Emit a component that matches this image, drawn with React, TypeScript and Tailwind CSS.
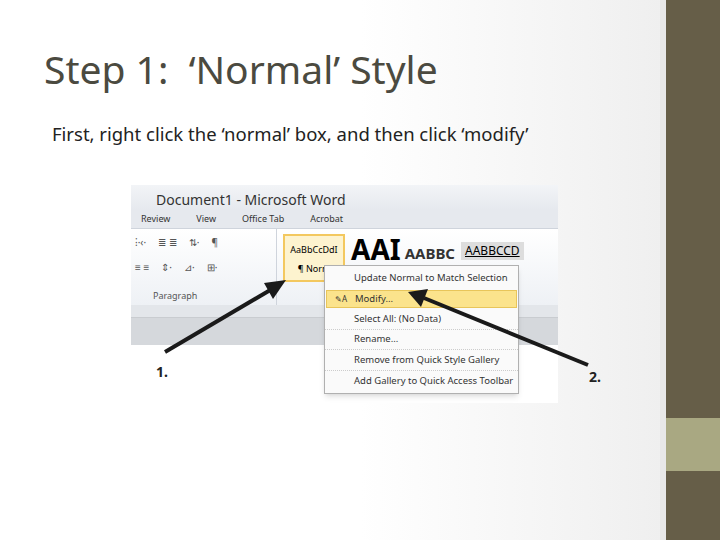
export default function App() {
  return (
    <div className="relative flex h-[540px] w-[720px] overflow-hidden bg-gradient-to-r from-white via-white to-[#ececec] font-['Lato',sans-serif]">
      <div className="flex-1">
        <h1 className="ml-[44px] mt-[44px] text-[39px] leading-[50px] text-[#4b4a40]">Step 1:&nbsp; ‘Normal’ Style</h1>
        <p className="ml-[52px] mt-[26px] text-[18.5px] text-[#222]">First, right click the ‘normal’ box, and then click ‘modify’</p>
        <div className="ml-[131px] mt-[37px] h-[218px] w-[427px] overflow-hidden bg-white font-['Liberation_Sans',sans-serif]">
          <div className="flex h-[25px] items-end bg-gradient-to-b from-[#f2f4f7] to-[#e6e9ee] pl-[25px] text-[14px] text-[#333]">Document1 - Microsoft Word</div>
          <div className="flex h-[18px] items-center gap-[26px] bg-[#e6e9ee] pl-[10px] text-[9px] text-[#333]">
            <span>Review</span><span>View</span><span>Office Tab</span><span>Acrobat</span>
          </div>
          <div className="flex h-[77px] border-t border-[#cfd4dc] bg-gradient-to-b from-white to-[#eef1f5]">
            <div className="flex w-[146px] flex-col border-r border-[#cfd4dc] px-1 text-[10px] text-[#555]">
              <div className="mt-[6px] flex gap-3"><span>⁝·‹·</span><span>≣ ≣</span><span>⇅·</span><span>¶</span></div>
              <div className="mt-[10px] flex gap-3"><span>≡ ≡</span><span>⇕·</span><span>⊿·</span><span>⊞·</span></div>
              <div className="mt-[14px] pl-[18px] text-[9px]">Paragraph</div>
            </div>
            <div className="ml-[6px] mt-[5px] flex h-[48px]">
              <div className="flex w-[62px] flex-col items-center border-2 border-[#f3c85f] bg-[#fdf3cf] text-[9px]">
                <span className="mt-[7px]">AaBbCcDdI</span><span className="mt-[6px]">¶ Norm</span>
              </div>
              <span className="ml-[6px] font-['Liberation_Serif',serif] text-[28px] font-bold leading-[30px]">AAI</span>
              <span className="ml-[4px] mt-[8px] text-[15px] font-bold text-[#333]">AABBC</span>
              <span className="ml-[6px] mt-[8px] h-[18px] bg-[#ddd] px-1 text-[12px] underline">AABBCCD</span>
            </div>
          </div>
          <div className="h-[12px] bg-[#e3e6ea]" />
          <div className="h-[28px] border-t border-[#c9ccd0] bg-[#d5d8dc]" />
        </div>
      </div>
      <div className="w-[6px] bg-[#e8e8e8]" />
      <div className="flex w-[54px] flex-col">
        <div className="h-[418px] bg-[#665e48]" />
        <div className="h-[53px] bg-[#a9a882]" />
        <div className="flex-1 bg-[#665e48]" />
      </div>
      {/* context menu */}
      <div className="absolute left-[324px] top-[265px] w-[195px] border border-[#b0b0b0] bg-[#fafafa] py-[2px] font-['Liberation_Sans',sans-serif] text-[9.5px] text-[#333] shadow-md">
        {[
          ["Update Normal to Match Selection", false, false],
          ["Modify...", true, false],
          ["Select All: (No Data)", false, true],
          ["Rename...", false, true],
          ["Remove from Quick Style Gallery", false, true],
          ["Add Gallery to Quick Access Toolbar", false, false],
        ].map(([t, hl, sep], i) => (
          <div key={i} className={`flex h-[20.5px] items-center ${sep ? "border-b border-dotted border-[#ccc]" : ""}`}>
            <div className={`mx-[1px] flex h-[18px] flex-1 items-center ${hl ? "border border-[#e8c55a] bg-[#fbe38c]" : ""}`}>
              <span className="w-[28px] text-center text-[8px]">{hl ? "✎A" : ""}</span>
              <span>{t as string}</span>
            </div>
          </div>
        ))}
      </div>
      <span className="absolute left-[156px] top-[361px] font-['Liberation_Sans',sans-serif] text-[14px] font-bold text-[#222]">1.</span>
      <span className="absolute left-[589px] top-[366px] font-['Liberation_Sans',sans-serif] text-[14px] font-bold text-[#222]">2.</span>
      <svg className="pointer-events-none absolute left-0 top-0" width="720" height="540">
        <line x1="165" y1="352" x2="272" y2="289" stroke="#1a1a1a" strokeWidth="4" />
        <polygon points="286,280 264,283 273,299" fill="#1a1a1a" />
        <line x1="588" y1="365" x2="424" y2="298" stroke="#1a1a1a" strokeWidth="4" />
        <polygon points="408,292 428,289 421,307" fill="#1a1a1a" />
      </svg>
    </div>
  );
}
